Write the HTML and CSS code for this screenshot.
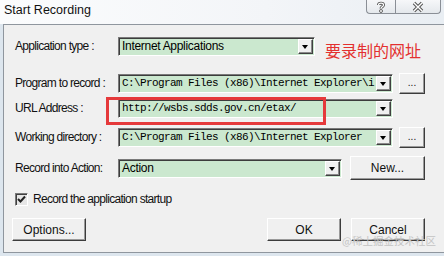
FILE: index.html
```html
<!DOCTYPE html>
<html lang="en">
<head>
  <meta charset="UTF-8">
  <title>Start Recording</title>
  <link rel="stylesheet" href="styles.css">
</head>
<body>
<div class="window">
  <div class="titlebar">
    <span class="title">Start Recording</span>
    <div class="caption">
      <span class="cap-btn help">
        <svg width="12" height="12" viewBox="0 0 12 12">
          <path d="M3.5 4 C3.5 1.5 8.5 1.5 8.5 4 C8.5 5.8 6 5.8 6 7.5" fill="none" stroke="#555" stroke-width="3"/>
          <path d="M3.5 4 C3.5 1.5 8.5 1.5 8.5 4 C8.5 5.8 6 5.8 6 7.5" fill="none" stroke="#fff" stroke-width="1.2"/>
          <circle cx="6" cy="10" r="1.5" fill="#fff" stroke="#555" stroke-width="0.9"/>
        </svg>
      </span>
      <span class="cap-btn close">
        <svg width="14" height="12" viewBox="0 0 14 12">
          <path d="M3 2 L11 10 M11 2 L3 10" stroke="#555" stroke-width="3.4"/>
          <path d="M3 2 L11 10 M11 2 L3 10" stroke="#fff" stroke-width="1.4"/>
        </svg>
      </span>
    </div>
  </div>

  <div class="client">
    <div class="row r1">
      <span class="lbl">Application type :</span>
      <div class="combo w-app"><span class="val">Internet Applications</span><span class="drop"></span></div>
      <span class="note">要录制的网址</span>
    </div>
    <div class="row r2">
      <span class="lbl">Program to record :</span>
      <div class="combo w-long"><span class="val mono">C:\Program Files (x86)\Internet Explorer\i</span><span class="drop"></span></div>
      <button class="btn dots">...</button>
    </div>
    <div class="row r3">
      <span class="lbl">URL Address :</span>
      <div class="combo w-long"><span class="val mono">http://wsbs.sdds.gov.cn/etax/</span><span class="drop"></span></div>
    </div>
    <div class="row r4">
      <span class="lbl">Working directory :</span>
      <div class="combo w-long"><span class="val mono">C:\Program Files (x86)\Internet Explorer</span><span class="drop"></span></div>
      <button class="btn dots">...</button>
    </div>
    <div class="row r5">
      <span class="lbl">Record into Action:</span>
      <div class="combo w-action"><span class="val">Action</span><span class="drop"></span></div>
      <button class="btn new">New...</button>
    </div>
    <div class="row r6">
      <span class="check">
        <svg width="9" height="9" viewBox="0 0 9 9"><path d="M1 4 L3.5 6.5 L8 1.5" fill="none" stroke="#222" stroke-width="2"/></svg>
      </span>
      <span class="lbl-check">Record the application startup</span>
    </div>
    <div class="row r7">
      <button class="btn wide options">Options...</button>
      <button class="btn wide ok">OK</button>
      <button class="btn wide">Cancel</button>
    </div>

    <div class="highlight"></div>
    <div class="watermark">@稀土掘金技术社区</div>
  </div>
</div>
</body>
</html>
```

FILE: styles.css
```css
body { margin: 0; width: 444px; height: 256px; overflow: hidden; font-family: "Liberation Sans", Arial, sans-serif; }
.window { height: 256px; display: flex; flex-direction: column; background: #dde6ee; }

.titlebar { height: 24px; display: flex; justify-content: space-between; background: linear-gradient(to right, #fbfcfd, #f3f5f8 60%, #e9eef3); }
.title { font-size: 12.5px; line-height: 16px; padding: 2px 0 0 4px; color: #111; }
.caption { display: flex; align-self: flex-start; margin-right: 3px; }
.cap-btn { height: 14px; box-sizing: border-box; border: 1px solid #8a8f96; border-top: none; background: linear-gradient(#f6f7f9, #e4e8ec); display: flex; align-items: center; justify-content: center; }
.help { width: 29px; border-radius: 0 0 0 4px; border-right: none; }
.close { width: 46px; border-radius: 0 0 4px 0; }

.client { flex: 1; margin: 0 0 3px 3px; position: relative; background: #f0f0f0; border-top: 1px solid #8f969e; border-left: 1px solid #8f969e; border-bottom: 1px solid #8f969e; padding: 10px 19px 0 11px; }

.row { display: flex; align-items: center; height: 22px; }
.r2 { margin-top: 15px; }
.r3 { margin-top: 3px; }
.r4 { margin-top: 7px; }
.r5 { margin-top: 8px; height: 24px; }
.r6 { margin-top: 11px; height: 16px; }
.r7 { margin-top: 11px; height: 23px; }

.lbl { width: 103px; flex-shrink: 0; font-size: 12px; letter-spacing: -0.7px; color: #111; white-space: nowrap; }

.combo { height: 19px; box-sizing: border-box; display: flex; align-items: center; background: #cbe8cf; border-top: 1px solid #7a7a7a; border-left: 1px solid #7a7a7a; border-bottom: 1px solid #fff; border-right: 1px solid #fff; box-shadow: inset 1px 1px #3c3c3c; overflow: hidden; }
.w-app { width: 197px; }
.w-long { width: 275px; }
.w-action { width: 224px; }
.val { flex: 1; overflow: hidden; white-space: nowrap; padding-left: 3px; font-size: 12px; letter-spacing: -0.3px; color: #000; }
.mono { font-family: "Liberation Mono", monospace; font-size: 11px; letter-spacing: -0.6px; }
.drop { width: 15px; height: 15px; flex-shrink: 0; box-sizing: border-box; margin-right: 1px; background: #f0f0f0; border-top: 1px solid #fff; border-left: 1px solid #fff; border-right: 1px solid #404040; border-bottom: 1px solid #404040; box-shadow: inset -1px -1px #8a8a8a; position: relative; }
.drop::after { content: ""; position: absolute; left: 3px; top: 5px; border-left: 3.5px solid transparent; border-right: 3.5px solid transparent; border-top: 4px solid #000; }

.note { margin: 8px 0 0 10px; font-family: "Noto Sans CJK SC", sans-serif; font-size: 16px; color: #e3302f; white-space: nowrap; }

.btn { box-sizing: border-box; font-family: "Liberation Sans", sans-serif; font-size: 12px; color: #111; background: #f0f0f0; border-top: 1px solid #fff; border-left: 1px solid #fff; border-right: 1px solid #3c3c3c; border-bottom: 1px solid #3c3c3c; box-shadow: inset -1px -1px #9a9a9a; padding: 0; }
.dots { width: 26px; height: 21px; margin-left: 6px; font-size: 10px; line-height: 1; }
.new { width: 75px; height: 24px; margin-left: 8px; }
.wide { width: 74px; height: 23px; }
.options { margin-left: -3px; }
.ok { margin-left: auto; margin-right: 10px; }

.check { width: 13px; height: 13px; box-sizing: border-box; background: #e6e6e6; border-top: 1px solid #7a7a7a; border-left: 1px solid #7a7a7a; border-right: 1px solid #fff; border-bottom: 1px solid #fff; box-shadow: inset 1px 1px #404040; display: flex; align-items: center; justify-content: center; }
.lbl-check { margin-left: 5px; font-size: 12px; letter-spacing: -0.7px; color: #111; }

.highlight { position: absolute; left: 102px; top: 72px; width: 220px; height: 28px; box-sizing: border-box; border: 3px solid #e5393b; }
.watermark { position: absolute; right: 8px; bottom: 4px; font-family: "Noto Sans CJK SC", sans-serif; font-size: 10.5px; color: #c4c4c4; }
```
